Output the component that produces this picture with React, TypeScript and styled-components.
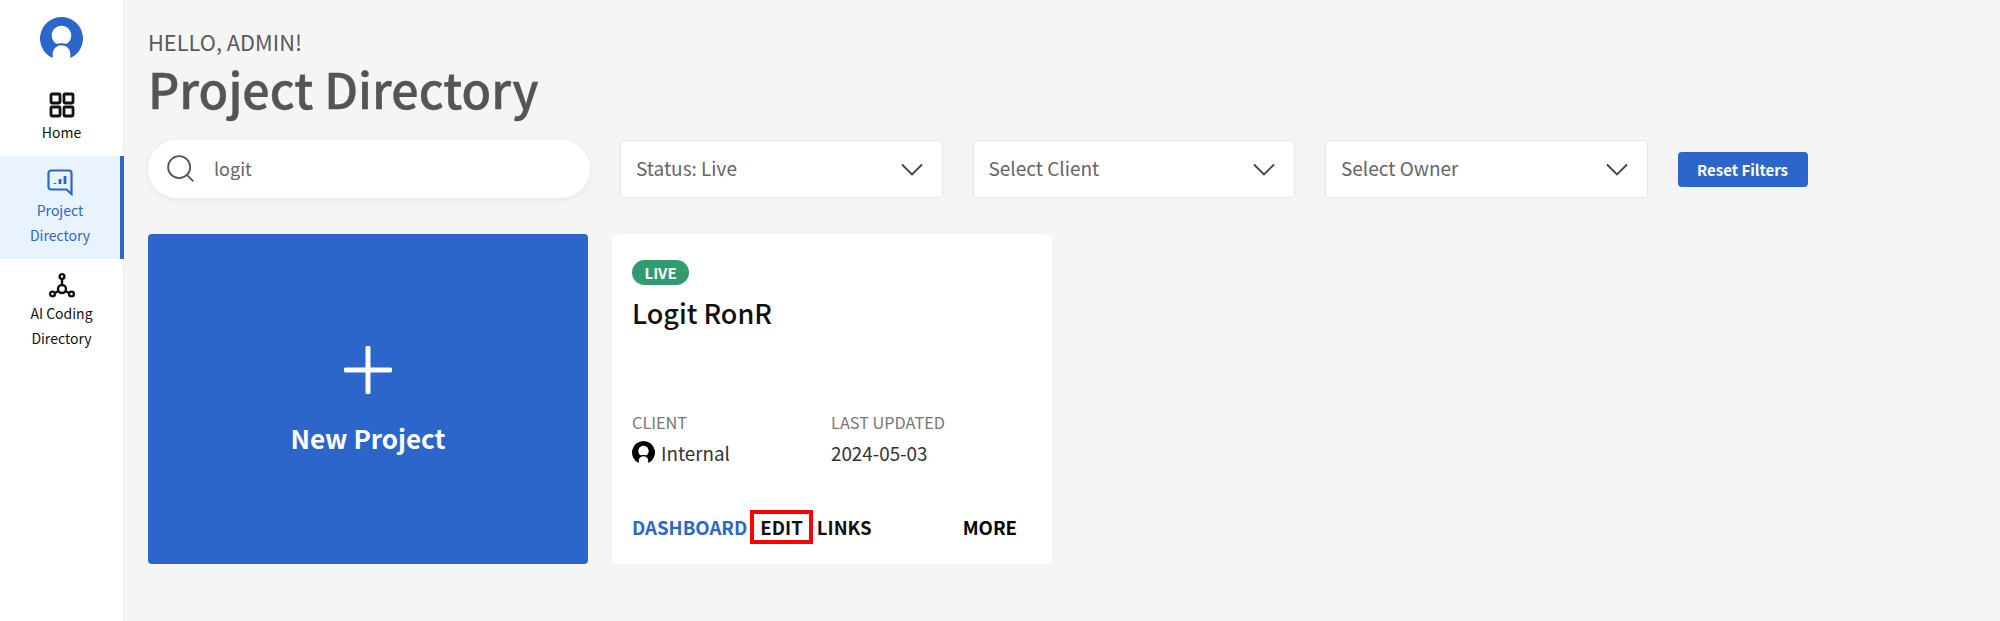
import React from "react";
import styled, { createGlobalStyle } from "styled-components";
import { FiSearch } from "react-icons/fi";

const GlobalStyle = createGlobalStyle`
  html, body {
    margin: 0;
    padding: 0;
    background: #f5f5f5;
    font-family: "Noto Sans CJK KR", "Noto Sans", sans-serif;
  }
  * { box-sizing: border-box; }
`;

const Page = styled.div`
  display: flex;
  width: 2000px;
  height: 621px;
  overflow: hidden;
`;

const Sidebar = styled.nav`
  width: 124px;
  flex: none;
  background: #fff;
  border-right: 1px solid #ececec;
  padding-top: 17px;
`;

const Logo = styled.div`
  display: flex;
  justify-content: center;
  height: 72px;
  padding-right: 1px;
`;

const NavItem = styled.div<{ $active?: boolean; $height: number; $top: number }>`
  display: flex;
  flex-direction: column;
  align-items: center;
  height: ${(p) => p.$height}px;
  padding-top: ${(p) => p.$top}px;
  color: ${(p) => (p.$active ? "#2d66cb" : "#111")};
  background: ${(p) => (p.$active ? "#e8f3fe" : "transparent")};
  border-right: ${(p) => (p.$active ? "4px solid #2d66cb" : "none")};
  margin-right: ${(p) => (p.$active ? "-1px" : "0")};
  font-size: 14px;
  line-height: 25px;
  text-align: center;
`;

const NavIcon = styled.svg`
  flex: none;
  margin-bottom: 1px;
`;

const ActiveNavIcon = styled(NavIcon)`
  margin-bottom: 2px;
`;

const Main = styled.main`
  flex: 1;
  padding: 24px 0 0 24px;
`;

const Greeting = styled.div`
  font-size: 21.800px;
  line-height: 36px;
  color: #5a5a5a;
`;

const Title = styled.h1`
  margin: 0;
  font-size: 48.400px;
  line-height: 56px;
  font-weight: 500;
  -webkit-text-stroke: 0.4px #555;
  color: #555;
`;

const Filters = styled.div`
  display: flex;
  align-items: center;
  margin-top: 24px;
`;

const Search = styled.div`
  display: flex;
  align-items: center;
  width: 442px;
  height: 58px;
  margin-right: 30px;
  padding: 0 0 2px 16px;
  border-radius: 29px;
  background: #fff;
  box-shadow: 0 2px 6px rgba(0, 0, 0, 0.06);
  color: #555;
  font-size: 18px;
`;

const SearchText = styled.span`
  margin-left: 17px;
  color: #666;
`;

const Select = styled.div`
  display: flex;
  align-items: center;
  justify-content: space-between;
  width: 322.500px;
  height: 58px;
  margin-right: 30px;
  padding: 0 19px 0 15px;
  background: #fff;
  border: 1px solid #e6e6e6;
  border-radius: 4px;
  color: #666;
  font-size: 19px;
`;

const SelectLabel = styled.span`
  padding-bottom: 4px;
`;

const ResetButton = styled.button`
  width: 130px;
  height: 35px;
  padding: 0;
  border: none;
  border-radius: 4px;
  background: #2d66cb;
  color: #fff;
  font: 700 15px "Noto Sans CJK KR", sans-serif;
`;

const Cards = styled.div`
  display: flex;
  gap: 24px;
  margin-top: 36px;
`;

const NewCard = styled.div`
  display: flex;
  flex-direction: column;
  align-items: center;
  width: 440px;
  height: 330px;
  padding-top: 112px;
  border-radius: 4px;
  background: #2d66cb;
  color: #fff;
  font-size: 26px;
  font-weight: 700;
`;

const NewCardLabel = styled.div`
  margin-top: 25px;
  line-height: 38px;
`;

const ProjectCard = styled.div`
  display: flex;
  flex-direction: column;
  width: 440px;
  height: 330px;
  padding: 26px 35px 0 20px;
  border-radius: 6px;
  background: #fff;
`;

const Badge = styled.span`
  align-self: flex-start;
  padding: 0 12.500px;
  height: 25px;
  border-radius: 13px;
  background: #329b6e;
  color: #fff;
  font-size: 15px;
  font-weight: 700;
  line-height: 25px;
`;

const CardTitle = styled.div`
  margin-top: 8px;
  font-size: 27px;
  line-height: 40px;
  font-weight: 500;
  color: #111;
`;

const Meta = styled.div`
  display: grid;
  grid-template-columns: 199px 1fr;
  margin-top: 77px;
`;

const MetaLabel = styled.div`
  font-size: 16.300px;
  line-height: 24px;
  color: #777;
`;

const MetaValue = styled.div`
  display: flex;
  align-items: center;
  gap: 6px;
  margin-top: 5px;
  font-size: 18.800px;
  line-height: 27px;
  color: #333;
`;

const Actions = styled.div`
  display: flex;
  align-items: center;
  margin-top: 47px;
  font-size: 18.600px;
  font-weight: 700;
  color: #111;
`;

const ActionLink = styled.span<{ $primary?: boolean; $outlined?: boolean }>`
  color: ${(p) => (p.$primary ? "#2d66cb" : "#111")};
  outline: ${(p) => (p.$outlined ? "4px solid #f00" : "none")};
  padding: ${(p) => (p.$outlined ? "0 6px" : "0")};
  margin: ${(p) => (p.$outlined ? "0 8px 0 7px" : "0")};
  line-height: 26px;
`;

const MoreLink = styled.span`
  margin-left: auto;
  color: #000;
`;

function UserLogo({ size, color }: { size: number; color: string }) {
  return (
    <svg width={size} height={size} viewBox="0 0 44 44">
      <path
        fill={color}
        fillRule="evenodd"
        d="M22 0A22 22 0 0 1 31 42.070V37A9 8 0 0 0 13 37V42.070A22 22 0 0 1 22 0ZM22 9C16.500 9 12 13.500 12 19C12 23 14 26 17 27.500C19 26.700 25 26.700 27 27.500C30 26 32 23 32 19C32 13.500 27.500 9 22 9Z"
      />
    </svg>
  );
}

function Chevron() {
  return (
    <svg width="22" height="13" viewBox="0 0 22 13" fill="none" stroke="#444" strokeWidth="1.800">
      <path d="M1 1.500L11 11.500L21 1.500" />
    </svg>
  );
}

export default function App() {
  return (
    <Page>
      <GlobalStyle />
      <Sidebar>
        <Logo>
          <UserLogo size={43} color="#2d66cb" />
        </Logo>
        <NavItem $height={67} $top={2}>
          <NavIcon width="28" height="28" viewBox="0 0 28 28" fill="none" stroke="currentColor" strokeWidth="2.800">
            <rect x="3" y="3" width="9" height="9" rx="1" />
            <rect x="16" y="3" width="9" height="9" rx="1" />
            <rect x="3" y="16" width="9" height="9" rx="1" />
            <rect x="16" y="16" width="9" height="9" rx="1" />
          </NavIcon>
          Home
        </NavItem>
        <NavItem $active $height={103} $top={12}>
          <ActiveNavIcon width="28" height="28" viewBox="0 0 28 28" fill="none" stroke="currentColor" strokeWidth="2.200">
            <path d="M5 2.500h18a2.500 2.500 0 0 1 2.500 2.500v21l-5-4.500H5A2.500 2.500 0 0 1 2.500 19V5A2.500 2.500 0 0 1 5 2.500Z" />
            <path d="M9 16v-1M14 16v-5M19 16V8" strokeWidth="2.800" />
          </ActiveNavIcon>
          Project
          <br />
          Directory
        </NavItem>
        <NavItem $height={90} $top={13}>
          <NavIcon width="28" height="28" viewBox="0 0 28 28" fill="none" stroke="currentColor" strokeWidth="2.400">
            <circle cx="14" cy="4.500" r="2.400" />
            <circle cx="4.500" cy="22" r="2.400" />
            <circle cx="23.500" cy="22" r="2.400" />
            <circle cx="14" cy="17" r="4" />
            <path d="M14 7v6M7 21l3.500-2M21 21l-3.500-2" />
          </NavIcon>
          AI Coding
          <br />
          Directory
        </NavItem>
      </Sidebar>
      <Main>
        <Greeting>HELLO, ADMIN!</Greeting>
        <Title>Project Directory</Title>
        <Filters>
          <Search>
            <FiSearch size={33} strokeWidth={1.3} />
            <SearchText>logit</SearchText>
          </Search>
          <Select>
            <SelectLabel>Status: Live</SelectLabel>
            <Chevron />
          </Select>
          <Select>
            <SelectLabel>Select Client</SelectLabel>
            <Chevron />
          </Select>
          <Select>
            <SelectLabel>Select Owner</SelectLabel>
            <Chevron />
          </Select>
          <ResetButton>Reset Filters</ResetButton>
        </Filters>
        <Cards>
          <NewCard>
            <svg width="48" height="48" viewBox="0 0 48 48" stroke="#fff" strokeWidth="5" strokeLinecap="round">
              <path d="M24 2v44M2 24h44" />
            </svg>
            <NewCardLabel>New Project</NewCardLabel>
          </NewCard>
          <ProjectCard>
            <Badge>LIVE</Badge>
            <CardTitle>Logit RonR</CardTitle>
            <Meta>
              <div>
                <MetaLabel>CLIENT</MetaLabel>
                <MetaValue>
                  <UserLogo size={23} color="#000" />
                  Internal
                </MetaValue>
              </div>
              <div>
                <MetaLabel>LAST UPDATED</MetaLabel>
                <MetaValue>2024-05-03</MetaValue>
              </div>
            </Meta>
            <Actions>
              <ActionLink $primary>DASHBOARD</ActionLink>
              <ActionLink $outlined>EDIT</ActionLink>
              <ActionLink>LINKS</ActionLink>
              <MoreLink>MORE</MoreLink>
            </Actions>
          </ProjectCard>
        </Cards>
      </Main>
    </Page>
  );
}
